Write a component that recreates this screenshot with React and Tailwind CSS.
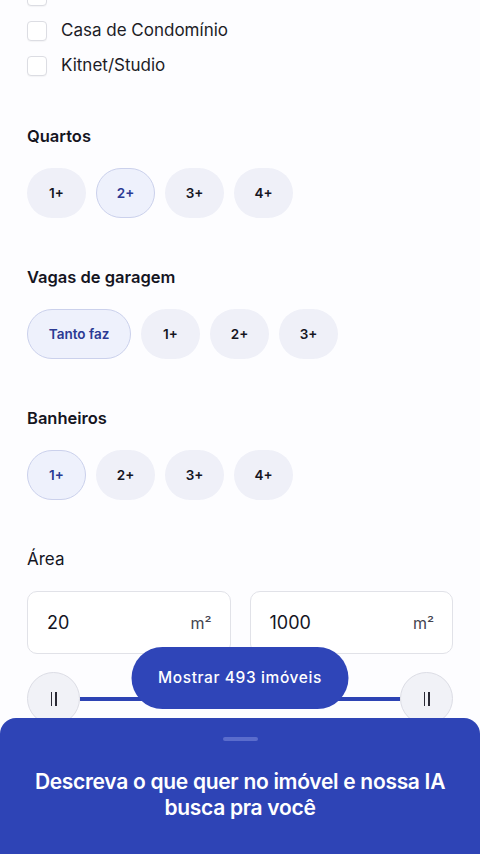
import React from "react";

const font = { fontFamily: "Inter, 'Noto Sans', sans-serif" };

// first row is scrolled out of view, only the box edge shows
const tipos = ["", "Casa de Condomínio", "Kitnet/Studio"];

function Pill({ label, active, wide }) {
  return (
    <button
      className={
        "h-[50px] rounded-full flex items-center justify-center text-[13.5px] font-semibold border " +
        (wide ? "w-[104px] " : "w-[59px] ") +
        (active
          ? "bg-[#eef1fc] border-[#cbd1ec] text-[#2b3a93]"
          : "bg-[#eff0f8] border-transparent text-[#15151f]")
      }
    >
      {label}
    </button>
  );
}

function Section({ title, children }) {
  return (
    <div>
      <h2 className="text-[16.5px] leading-[24px] font-semibold text-[#15151f]">{title}</h2>
      <div className="mt-[20px] flex gap-[10px]">{children}</div>
    </div>
  );
}

function AreaInput({ value }) {
  return (
    <div className="flex-1 h-[63px] rounded-[10px] border border-[#e1e2e8] bg-white flex items-center justify-between pl-[19px] pr-[18px]">
      <span className="text-[18px] text-[#15151f]">{value}</span>
      <span className="text-[16px] text-[#44444f]">m²</span>
    </div>
  );
}

function Thumb() {
  return (
    <div className="w-[53px] h-[53px] rounded-full bg-[#f1f2f7] border border-[#dcdde5] flex items-center justify-center shrink-0">
      <div className="flex gap-[3px]">
        <span className="w-[1.5px] h-[14px] bg-[#2a2a35]" />
        <span className="w-[1.5px] h-[14px] bg-[#2a2a35]" />
      </div>
    </div>
  );
}

export default function App() {
  return (
    <div style={font} className="relative w-[480px] h-[854px] overflow-hidden bg-[#fdfdff]">
      <div className="px-[27px]">
        <div className="mt-[-22px]">
          {tipos.map((t, i) => (
            <label key={i} className="h-[35px] flex items-center gap-[14px]">
              <span className="w-[20px] h-[20px] rounded-[4px] border border-[#dcdde3] bg-white shadow-[0_1px_1px_rgba(0,0,0,0.04)]" />
              {t && <span className="text-[17px] text-[#1c1c26]">{t}</span>}
            </label>
          ))}
        </div>

        <div className="mt-[41px] flex flex-col gap-[47px]">
          <Section title="Quartos">
            <Pill label="1+" />
            <Pill label="2+" active />
            <Pill label="3+" />
            <Pill label="4+" />
          </Section>
          <Section title="Vagas de garagem">
            <Pill label="Tanto faz" active wide />
            <Pill label="1+" />
            <Pill label="2+" />
            <Pill label="3+" />
          </Section>
          <Section title="Banheiros">
            <Pill label="1+" active />
            <Pill label="2+" />
            <Pill label="3+" />
            <Pill label="4+" />
          </Section>
          <div>
            <h2 className="text-[17px] leading-[24px] text-[#15151f]">Área</h2>
            <div className="mt-[20px] flex gap-[19px]">
              <AreaInput value="20" />
              <AreaInput value="1000" />
            </div>
            <div className="mt-[18px] flex items-center">
              <Thumb />
              <div className="flex-1 h-[4px] bg-[#2d43b4]" />
              <Thumb />
            </div>
          </div>
        </div>
      </div>

      <button className="absolute left-1/2 -translate-x-1/2 top-[647px] w-[217px] h-[62px] rounded-full bg-[#2f45b8] text-white text-[15.5px] font-medium tracking-[0.6px]">
        Mostrar 493 imóveis
      </button>

      <div className="absolute left-0 right-0 bottom-0 h-[136px] rounded-t-[16px] bg-[#2e44b6] flex flex-col items-center">
        <div className="mt-[19px] w-[35px] h-[4px] rounded-full bg-[#5a6ccc]" />
        <p className="mt-[28px] px-[30px] text-center text-white text-[21px] leading-[26px] font-semibold tracking-[-0.3px]">
          Descreva o que quer no imóvel e nossa IA busca pra você
        </p>
      </div>
    </div>
  );
}
